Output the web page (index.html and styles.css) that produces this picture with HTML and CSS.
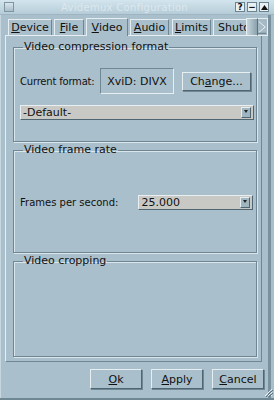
FILE: index.html
```html
<!DOCTYPE html>
<html>
<head>
<meta charset="utf-8">
<link rel="stylesheet" href="styles.css">
</head>
<body>
<div class="window">
  <div class="titlebar">
    <span class="tb-box"></span>
    <span class="title">Avidemux Configuration</span>
    <span class="tb-btns">
      <span class="tb-btn">?</span>
      <span class="tb-btn">&minus;</span>
      <span class="tb-btn tri"><svg width="7" height="5" viewBox="0 0 7 5"><path d="M0 5 L3.5 0 L7 5 Z" fill="#111"/></svg></span>
    </span>
  </div>
  <div class="body">
    <div class="tabs">
      <span class="tab t1"><u>D</u>evice</span>
      <span class="tab t2"><u>F</u>ile</span>
      <span class="tab sel"><u>V</u>ideo</span>
      <span class="tab t4"><u>A</u>udio</span>
      <span class="tab t5"><u>L</u>imits</span>
      <span class="tab clip">Shutdo</span>
      <span class="scroller">
        <span class="sc-left"></span>
        <span class="sc-right"><svg width="10" height="16" viewBox="0 0 10 16"><path d="M1 2 L8 8 L1 14" fill="none" stroke="#eef3f6" stroke-width="1"/><path d="M0 15 L9 15" stroke="#5d7380" stroke-width="1"/></svg></span>
      </span>
    </div>
    <div class="panel">
      <fieldset class="group g1">
        <legend>Video compression format</legend>
        <div class="row fmt">
          <span class="lbl">Current format:</span>
          <span class="fmtbox">XviD: DIVX</span>
          <span class="btn change">Ch<u>a</u>nge...</span>
        </div>
        <div class="combo wide"><span class="ctext">-Default-</span><span class="carrow"></span></div>
      </fieldset>
      <fieldset class="group g2">
        <legend>Video frame rate</legend>
        <div class="row fps">
          <span class="lbl">Frames per second:</span>
          <div class="combo small"><span class="ctext">25.000</span><span class="carrow"></span></div>
        </div>
      </fieldset>
      <fieldset class="group g3">
        <legend>Video cropping</legend>
      </fieldset>
    </div>
    <div class="buttons">
      <span class="btn dlg"><u>O</u>k</span>
      <span class="btn dlg"><u>A</u>pply</span>
      <span class="btn dlg"><u>C</u>ancel</span>
    </div>
  </div>
  <svg class="grip" width="10" height="10" viewBox="0 0 10 10">
    <path d="M9 2 L2 9 M9 5 L5 9 M9 8 L8 9" stroke="#e8f0f4" stroke-width="1"/>
    <path d="M10 3 L3 10 M10 6 L6 10" stroke="#5d7380" stroke-width="1"/>
  </svg>
</div>
</body>
</html>
```
FILE: styles.css
```css
* { box-sizing: border-box; }
html, body { margin: 0; padding: 0; }
body {
  width: 274px; height: 400px; overflow: hidden;
  background: #a9bfcb;
  font-family: "DejaVu Sans", sans-serif;
  font-size: 10px;
  color: #111;
}
u { text-decoration: underline; text-underline-offset: 1px; }
.window {
  width: 274px; height: 400px;
  display: flex; flex-direction: column;
  position: relative;
  border-bottom: 2px solid #6f8793;
}
.titlebar {
  height: 15px;
  background: linear-gradient(#d3e5ee, #b5ccd8);
  display: flex; align-items: center;
  padding: 0 5px 0 4px;
  border-bottom: 1px solid #9fb6c2;
}
.tb-box {
  width: 10px; height: 10px;
  border: 1px solid #7f95a1;
  background: linear-gradient(#d8e6ee, #aabdc8);
}
.title {
  flex: 1; text-align: center;
  color: #e2ecf1; font-size: 10px; letter-spacing: 0.3px;
  opacity: 0.8;
}
.tb-btns { display: flex; gap: 2px; }
.tb-btn {
  width: 10px; height: 10px;
  border: 1px solid #6d8390;
  background: #e8f0f4;
  font-size: 9px; font-weight: bold; line-height: 8px;
  display: flex; align-items: center; justify-content: center;
  color: #111;
}
.body {
  flex: 1; display: flex; flex-direction: column;
  padding: 2px 6px 0 4px;
  border-left: 1px solid #c7d7df;
  border-right: 3px solid #7a919d;
  margin-right: 3px;
}
.tabs {
  display: flex; align-items: flex-end; height: 18px;
  padding-left: 3px; position: relative;
}
.tab {
  flex-shrink: 0;
  height: 16px; padding: 0;
  text-align: center;
  border: 1px solid #e6eef2; border-bottom: none;
  border-right-color: #6f8793;
  margin-right: 2px;
  font-size: 11px; line-height: 15px;
  background: #a9bfcb;
}
.t1 { width: 44px; }
.t2 { width: 30px; }
.t4 { width: 39px; margin-right: 3px; }
.t5 { width: 39px; }
.tab.sel { height: 18px; width: 42px; margin-bottom: -1px; z-index: 1; line-height: 17px; }
.tab.clip { width: 33px; overflow: hidden; border-right: none; padding-left: 4px; text-align: left; white-space: nowrap; margin-right: 0; }
.scroller {
  display: flex; height: 18px; margin-right: -6px; margin-bottom: -1px; z-index: 2;
}
.sc-left {
  width: 11px; height: 18px;
  background: linear-gradient(90deg, #c6d5dc, #8aa1ad);
  border: 1px solid #e6eef2; border-right: none;
}
.sc-right {
  width: 11px; height: 18px;
  background: #a5bac5;
  border: 1px solid #e6eef2; border-left: 1px solid #5d7380;
  display: flex;
}
.panel {
  height: 327px;
  border: 1px solid #e6eef2;
  border-right-color: #6f8793; border-bottom-color: #6f8793;
  padding: 5px 4px 4px 7px;
  display: flex; flex-direction: column; gap: 2px;
}
.group {
  margin: 0; padding: 0 3px 0 6px;
  border: 1px solid #6f8793;
  box-shadow: inset 1px 1px 0 #dbe6ec, 1px 1px 0 #dbe6ec;
  min-width: 0;
}
legend {
  font-size: 11px; padding: 0 1px; margin-left: 3px;
  line-height: 12px;
}
.g1 { height: 101px; }
.g2 { height: 109px; }
.g3 { flex: 1; }
.row { display: flex; align-items: center; }
.fmt { margin-top: 15px; height: 26px; }
.lbl { font-size: 10px; }
.fmt .lbl { width: 80px; letter-spacing: -0.2px; }
.fmtbox {
  width: 74px; height: 26px;
  border: 1px solid #6f8793;
  border-right-color: #e6eef2; border-bottom-color: #e6eef2;
  display: flex; align-items: center; justify-content: center;
  font-size: 11px;
}
.btn {
  display: flex; align-items: center; justify-content: center;
  border: 1px solid #e6eef2;
  border-right-color: #4f6571; border-bottom-color: #4f6571;
  box-shadow: 1px 1px 0 #6f8793;
  font-size: 11px;
  background: #a9bfcb;
}
.change { width: 69px; height: 19px; margin-left: 8px; }
.combo {
  display: flex; height: 15px;
  background: #c8c9c5;
  border: 1px solid #e8eef2;
  border-right-color: #4f6571; border-bottom-color: #4f6571;
}
.wide { margin-top: 11px; width: 234px; }
.ctext { flex: 1; font-size: 11px; line-height: 13px; padding-left: 2px; }
.carrow {
  width: 10px; height: 11px; margin: 1px 2px 0 0;
  background: #9fb5c0;
  border: 1px solid #e6eef2; border-right-color: #4f6571; border-bottom-color: #4f6571;
  position: relative;
}
.carrow::after {
  content: ""; position: absolute; left: 2px; top: 2px;
  border-left: 2px solid transparent; border-right: 2px solid transparent;
  border-top: 3px solid #222;
}
.fps { margin-top: 39px; }
.fps .lbl { width: 119px; font-size: 10px; }
.small { width: 115px; }
.buttons {
  display: flex; justify-content: flex-end; gap: 9px;
  padding: 7px 0 0 0; margin-right: -2px;
}
.dlg { width: 52px; height: 20px; }
.grip { position: absolute; right: 1px; bottom: 1px; }
```
